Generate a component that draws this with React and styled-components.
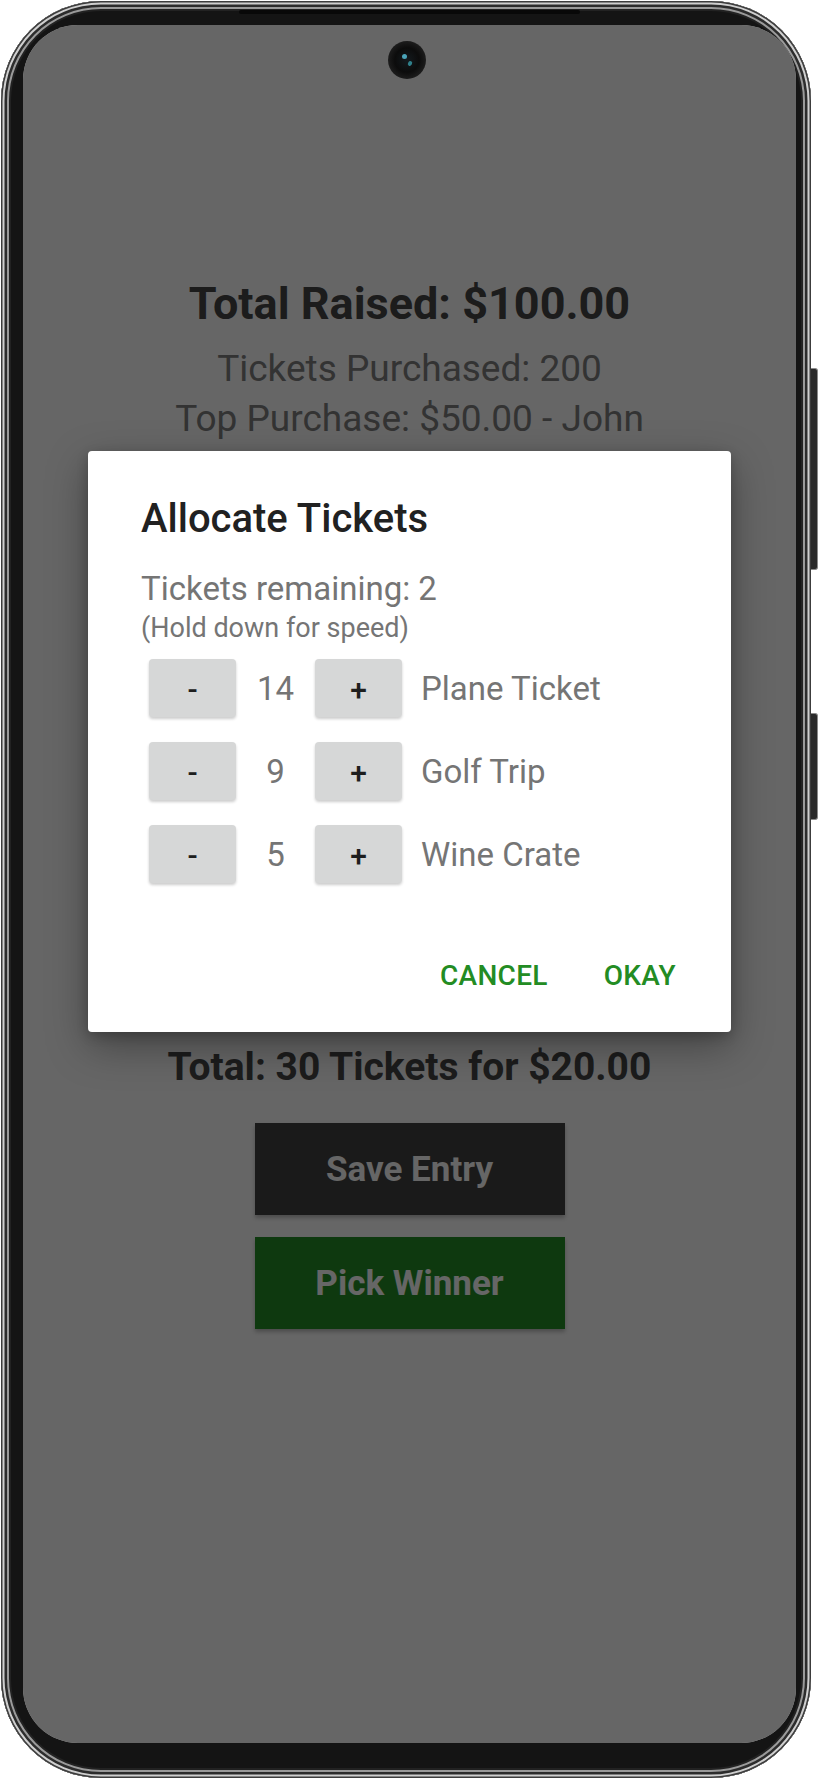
import React from "react";
import styled, { createGlobalStyle } from "styled-components";

const Global = createGlobalStyle`
  html, body { margin: 0; padding: 0; background: #ffffff; }
  body { font-family: Roboto, "Liberation Sans", Arial, sans-serif; }
  * { box-sizing: border-box; }
`;

const Page = styled.div`
  width: 820px;
  height: 1780px;
  padding: 1px 0 0 1px;
  display: flex;
  align-items: flex-start;
  overflow: hidden;
`;

const Phone = styled.div`
  position: relative;
  width: 810px;
  height: 1777px;
  padding: 24px 15px 35px 22px;
  border-radius: 100px;
  background: #141414;
  box-shadow:
    inset 0 0 0 1.5px #3c3c3c,
    inset 0 0 0 3.5px #cfcfcf,
    inset 0 0 0 6px #2c2c2c,
    inset 0 0 0 8px #9a9a9a,
    inset 0 0 0 10px #222222;
`;

const Speaker = styled.div`
  position: absolute;
  left: 238px;
  top: 9px;
  width: 341px;
  height: 4px;
  border-radius: 2px;
  background: #080808;
`;

const SideRail = styled.div`
  display: flex;
  flex-direction: column;
  gap: 143px;
  padding-top: 367px;
`;

const SideKey = styled.div`
  width: 7px;
  height: ${(p) => p.$h}px;
  border-radius: 0 3px 3px 0;
  background: #2a2a2a;
  border: 1.5px solid #8a8a8a;
  border-left: none;
`;

const Screen = styled.div`
  position: relative;
  width: 100%;
  height: 100%;
  border-radius: 55px;
  overflow: hidden;
  background: #ffffff;
  display: flex;
  flex-direction: column;
  align-items: center;
  padding-top: 252px;
`;

const Camera = styled.div`
  position: absolute;
  z-index: 3;
  left: 365px;
  top: 16px;
  width: 38px;
  height: 38px;
  border-radius: 50%;
  background: radial-gradient(circle at 50% 50%, #141a1e 0%, #0c0c0c 45%, #1c1c1c 70%, #2e2e2e 100%);
  &::before {
    content: "";
    position: absolute;
    left: 14px;
    top: 13px;
    width: 5px;
    height: 5px;
    border-radius: 50%;
    background: #4aa3b8;
  }
  &::after {
    content: "";
    position: absolute;
    left: 20px;
    top: 20px;
    width: 4px;
    height: 5px;
    border-radius: 50%;
    background: #2f7f8a;
    transform: rotate(30deg);
  }
`;

const Headline = styled.h1`
  margin: 0;
  font-size: 45px;
  line-height: 53px;
  font-weight: 700;
  color: #474747;
`;

const Stats = styled.div`
  margin-top: 14px;
  display: flex;
  flex-direction: column;
  align-items: center;
  font-size: 37px;
  line-height: 50px;
  color: #808080;
`;

const FormArea = styled.div`
  height: 600px;
`;

const TotalLine = styled.div`
  font-size: 39px;
  line-height: 46px;
  font-weight: 700;
  color: #474747;
`;

const Actions = styled.div`
  margin-top: 33px;
  display: flex;
  flex-direction: column;
  gap: 22px;
`;

const BigButton = styled.button`
  width: 310px;
  height: 92px;
  border: none;
  border-radius: 0;
  background: ${(p) => (p.$tone === "green" ? "#248f27" : "#414141")};
  color: #ffffff;
  font-family: Roboto, "Liberation Sans", Arial, sans-serif;
  font-size: 35px;
  font-weight: 700;
  display: flex;
  align-items: center;
  justify-content: center;
  box-shadow: 0 3px 4px rgba(0, 0, 0, 0.25);
`;

const Scrim = styled.div`
  position: absolute;
  inset: 0;
  z-index: 2;
  background: rgba(0, 0, 0, 0.6);
  display: flex;
  flex-direction: column;
  align-items: center;
  padding-top: 426px;
`;

const Dialog = styled.div`
  width: 643px;
  background: #ffffff;
  border-radius: 4px;
  padding: 44px 27px 25px 53px;
  box-shadow: 0 14px 40px rgba(0, 0, 0, 0.35), 0 4px 12px rgba(0, 0, 0, 0.2);
  display: flex;
  flex-direction: column;
`;

const DialogTitle = styled.h2`
  margin: 0;
  font-size: 40px;
  line-height: 47px;
  font-weight: 500;
  color: #212121;
`;

const Remaining = styled.div`
  margin-top: 27px;
  font-size: 33px;
  line-height: 39px;
  color: #757575;
`;

const Hint = styled.div`
  margin-top: 4px;
  font-size: 27px;
  line-height: 32px;
  color: #757575;
`;

const Rows = styled.div`
  margin-top: 15px;
  padding-left: 8px;
  display: flex;
  flex-direction: column;
  gap: 25px;
`;

const Row = styled.div`
  display: flex;
  align-items: center;
  height: 58px;
`;

const StepButton = styled.button`
  width: 87px;
  height: 58px;
  border: none;
  border-radius: 4px;
  background: #d6d7d7;
  box-shadow: 0 2px 3px rgba(0, 0, 0, 0.2);
  color: #1e1e1e;
  font-family: Roboto, "Liberation Sans", Arial, sans-serif;
  font-size: 30px;
  font-weight: 500;
  padding: 3px 0 0;
  display: flex;
  align-items: center;
  justify-content: center;
`;

const Count = styled.span`
  width: 79px;
  text-align: center;
  font-size: 33px;
  color: #757575;
`;

const Label = styled.span`
  margin-left: 19px;
  font-size: 33px;
  color: #757575;
`;

const DialogActions = styled.div`
  margin-top: 60px;
  display: flex;
  justify-content: flex-end;
`;

const TextButton = styled.button`
  height: 64px;
  padding: 0 28px;
  border: none;
  background: transparent;
  color: #238c23;
  font-family: Roboto, "Liberation Sans", Arial, sans-serif;
  font-size: 28px;
  font-weight: 500;
  letter-spacing: 0.3px;
  text-transform: uppercase;
  display: flex;
  align-items: center;
`;

const prizes = [
  { name: "Plane Ticket", count: 14 },
  { name: "Golf Trip", count: 9 },
  { name: "Wine Crate", count: 5 },
];

export default function App() {
  return (
    <Page>
      <Global />
      <Phone>
        <Speaker />
        <Screen>
          <Camera />
          <Headline>Total Raised: $100.00</Headline>
          <Stats>
            <span>Tickets Purchased: 200</span>
            <span>Top Purchase: $50.00 - John</span>
          </Stats>
          <FormArea />
          <TotalLine>Total: 30 Tickets for $20.00</TotalLine>
          <Actions>
            <BigButton>Save Entry</BigButton>
            <BigButton $tone="green">Pick Winner</BigButton>
          </Actions>
          <Scrim>
            <Dialog>
              <DialogTitle>Allocate Tickets</DialogTitle>
              <Remaining>Tickets remaining: 2</Remaining>
              <Hint>(Hold down for speed)</Hint>
              <Rows>
                {prizes.map((p) => (
                  <Row key={p.name}>
                    <StepButton>-</StepButton>
                    <Count>{p.count}</Count>
                    <StepButton>+</StepButton>
                    <Label>{p.name}</Label>
                  </Row>
                ))}
              </Rows>
              <DialogActions>
                <TextButton>Cancel</TextButton>
                <TextButton>Okay</TextButton>
              </DialogActions>
            </Dialog>
          </Scrim>
        </Screen>
      </Phone>
      <SideRail>
        <SideKey $h={202} />
        <SideKey $h={107} />
      </SideRail>
    </Page>
  );
}
